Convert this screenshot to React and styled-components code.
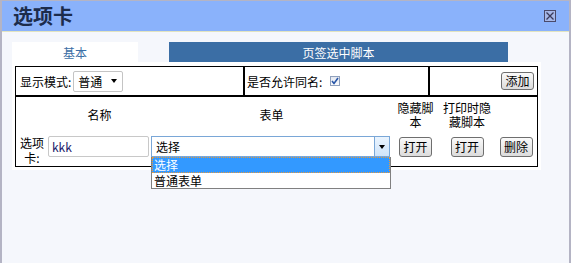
import React from "react";
import styled, { createGlobalStyle } from "styled-components";

const GlobalStyle = createGlobalStyle`
  html, body {
    margin: 0;
    padding: 0;
    background: #f5f7fc;
  }
  body {
    font-family: "Noto Sans CJK SC", "DejaVu Sans", sans-serif;
    font-size: 12px;
    color: #000;
  }
  * { box-sizing: border-box; }
`;

const Window = styled.div`
  width: 571px;
  height: 263px;
  display: flex;
  flex-direction: column;
  background: #f5f7fc;
  border-left: 2px solid #b4b4c4;
  border-right: 2px solid #b4b4c4;
  border-top: 1px solid #b4b4c4;
`;

const TitleBar = styled.div`
  height: 31px;
  flex: none;
  display: flex;
  align-items: center;
  justify-content: space-between;
  padding: 0 13px 0 11px;
  background: #8ab2fb;
  border-bottom: 1px solid #e2e4c0;
`;

const Title = styled.h1`
  margin: 0;
  font-size: 20px;
  line-height: 24px;
  font-weight: bold;
  color: #1c2c4c;
`;

const CloseBox = styled.span`
  width: 12px;
  height: 12px;
  display: flex;
  align-items: center;
  justify-content: center;
  border: 1px solid #4a4a6a;
  background: #a6b8e8;
`;

const Body = styled.div`
  padding: 10px 28px 0 10px;
`;

const Tabs = styled.div`
  display: flex;
  gap: 31px;
  height: 20px;
`;

const Tab = styled.div`
  width: ${(p) => p.$width}px;
  display: flex;
  align-items: center;
  justify-content: center;
  background: ${(p) => (p.$active ? "#ffffff" : "#3b6ea5")};
  color: ${(p) => (p.$active ? "#3b6ea5" : "#ffffff")};
  font-size: 12px;
`;

const Panel = styled.div`
  background: #fff;
  padding: 4px 3px 3px 3px;
`;

const Table = styled.div`
  border: 1px solid #000;
`;

const TopRow = styled.div`
  display: grid;
  grid-template-columns: 227px 183px 107px;
  column-gap: 2px;
  background: #000;
  border-bottom: 2px solid #000;
  height: 30px;
`;

const Cell = styled.div`
  background: #fff;
  display: flex;
  align-items: center;
  justify-content: ${(p) => (p.$end ? "flex-end" : "flex-start")};
  padding: ${(p) => (p.$end ? "0 3px 0 0" : `0 0 0 ${p.$pad || 0}px`)};
`;

const Label = styled.span`
  white-space: nowrap;
`;

const MiniSelect = styled.div`
  width: 50px;
  height: 21px;
  margin-left: 2px;
  border: 1px solid #c4c4c4;
  border-radius: 2px;
  display: flex;
  align-items: center;
  justify-content: space-between;
  padding: 0 5px 0 4px;
`;

const Arrow = styled.span`
  width: 0;
  height: 0;
  border-left: 3.5px solid transparent;
  border-right: 3.5px solid transparent;
  border-top: 4px solid #000;
`;

const Check = styled.span`
  width: 10px;
  height: 10px;
  margin-left: 8px;
  border: 1px solid #8fa0bc;
  background: linear-gradient(#e4e8f0, #fafbfd);
  display: flex;
  align-items: center;
  justify-content: center;
`;

const Button = styled.button`
  width: 33px;
  height: ${(p) => p.$h || 20}px;
  padding: 0;
  border: 1px solid #6e6e6e;
  border-radius: 3px;
  background: linear-gradient(#fafafa, #dcdcdc);
  font-family: inherit;
  font-size: 12px;
  color: #000;
  line-height: 1;
`;

const Grid = styled.div`
  display: grid;
  grid-template-columns: 32px 103px 241px 47px 56px 42px;
  grid-template-rows: 36px 33px;
`;

const Head = styled.div`
  display: flex;
  align-items: center;
  justify-content: center;
  text-align: center;
  line-height: 14px;
  padding: ${(p) => (p.$narrow ? "0 4px" : "0")};
`;

const Slot = styled.div`
  position: relative;
  display: flex;
  align-items: flex-start;
  justify-content: ${(p) => (p.$center ? "center" : "flex-start")};
  padding-top: ${(p) => p.$top || 3}px;
`;

const RowLabel = styled.div`
  width: 32px;
  text-align: center;
  line-height: 15px;
  margin-top: -1px;
`;

const TextInput = styled.div`
  width: 101px;
  height: 21px;
  border: 1px solid #c8c8c8;
  border-radius: 2px;
  display: flex;
  align-items: center;
  padding-left: 3px;
  color: #1a1a6a;
`;

const FormSelect = styled.div`
  width: 239px;
  height: 21px;
  border: 1px solid #7aa7d7;
  display: flex;
  align-items: stretch;
`;

const SelectText = styled.span`
  flex: 1;
  display: flex;
  align-items: center;
  padding-left: 4px;
`;

const SelectButton = styled.span`
  width: 15px;
  border-left: 1px solid #7aa7d7;
  background: linear-gradient(#eaf4fe, #cfe4fa);
  display: flex;
  align-items: center;
  justify-content: center;
`;

const DropList = styled.ul`
  position: absolute;
  left: 0;
  top: 24px;
  width: 240px;
  margin: 0;
  padding: 0;
  list-style: none;
  background: #fff;
  border: 1px solid #808080;
  border-top: none;
  z-index: 2;
`;

const Option = styled.li`
  height: ${(p) => (p.$selected ? 16 : 15)}px;
  line-height: ${(p) => (p.$selected ? 16 : 15)}px;
  overflow: hidden;
  padding-left: 2px;
  background: ${(p) => (p.$selected ? "#3399ff" : "#fff")};
  color: ${(p) => (p.$selected ? "#fff" : "#000")};
  outline: ${(p) => (p.$selected ? "1px dotted #e89a3c" : "none")};
  outline-offset: -1px;
`;

export default function App() {
  return (
    <>
      <GlobalStyle />
      <Window>
        <TitleBar>
          <Title>选项卡</Title>
          <CloseBox>
            <svg width="8" height="8" viewBox="0 0 8 8">
              <path d="M0.5 0.5 L7.5 7.5 M7.5 0.5 L0.5 7.5" stroke="#3a3a5a" strokeWidth="1.3" />
            </svg>
          </CloseBox>
        </TitleBar>
        <Body>
          <Tabs>
            <Tab $active $width={126}>基本</Tab>
            <Tab $width={339}>页签选中脚本</Tab>
          </Tabs>
          <Panel>
            <Table>
              <TopRow>
                <Cell $pad={4}>
                  <Label>显示模式:</Label>
                  <MiniSelect>
                    <span>普通</span>
                    <Arrow />
                  </MiniSelect>
                </Cell>
                <Cell $pad={2}>
                  <Label>是否允许同名:</Label>
                  <Check>
                    <svg width="8" height="8" viewBox="0 0 8 8">
                      <path d="M1 4 L3 6.5 L7 1" fill="none" stroke="#2856a8" strokeWidth="1.6" />
                    </svg>
                  </Check>
                </Cell>
                <Cell $end>
                  <Button $h={18}>添加</Button>
                </Cell>
              </TopRow>
              <Grid>
                <Head />
                <Head>名称</Head>
                <Head>表单</Head>
                <Head $narrow>隐藏脚本</Head>
                <Head $narrow>打印时隐藏脚本</Head>
                <Head />
                <Slot $top={0}>
                  <RowLabel>选项卡:</RowLabel>
                </Slot>
                <Slot>
                  <TextInput>kkk</TextInput>
                </Slot>
                <Slot>
                  <FormSelect>
                    <SelectText>选择</SelectText>
                    <SelectButton>
                      <Arrow />
                    </SelectButton>
                  </FormSelect>
                  <DropList>
                    <Option $selected>选择</Option>
                    <Option>普通表单</Option>
                  </DropList>
                </Slot>
                <Slot $center $top={4}>
                  <Button>打开</Button>
                </Slot>
                <Slot $center $top={4}>
                  <Button>打开</Button>
                </Slot>
                <Slot $center $top={4}>
                  <Button>删除</Button>
                </Slot>
              </Grid>
            </Table>
          </Panel>
        </Body>
      </Window>
    </>
  );
}
